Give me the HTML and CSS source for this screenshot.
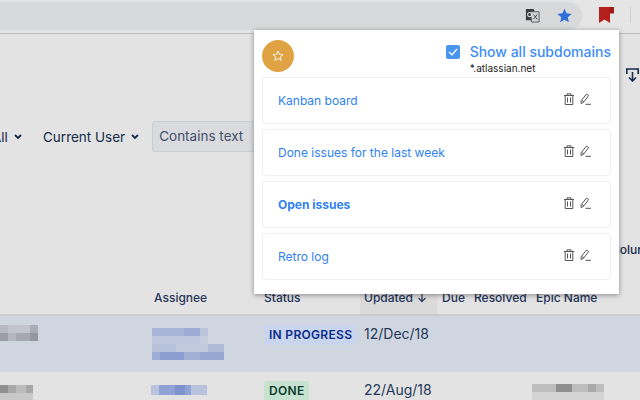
FILE: index.html
```html
<!DOCTYPE html>
<html lang="en">
<head>
<meta charset="utf-8">
<title>Saved filters</title>
<link rel="stylesheet" href="styles.css">
</head>
<body>
<div class="page">
  <header class="toolbar">
    <div class="omnibox">
      <svg class="translate" width="15" height="15" viewBox="0 0 16 16"><path d="M1 1h8l1 2v10H1z" fill="#3c3c3c"/><path d="M6 4h9v11H7z" fill="#d4d4d4" stroke="#555" stroke-width="1"/><circle cx="5" cy="7" r="2.2" fill="none" stroke="#ddd" stroke-width="1.1"/><path d="M9 7l4 5M13 7l-4 5" stroke="#444" stroke-width="1"/></svg>
      <svg class="star" width="15" height="15" viewBox="0 0 16 16"><path d="M8 .8l2.2 4.900 5.300.6-4 3.600 1.100 5.300L8 12.500l-4.600 2.700 1.100-5.300-4-3.600 5.300-.6z" fill="#2f6fd6"/></svg>
    </div>
    <svg class="mark" width="15" height="16" viewBox="0 0 15 16"><path d="M0 0h11v16l-5.500-3.500L0 16z" fill="#b3201c"/><path d="M11 0h4v6.500h-4z" fill="#a01c18"/></svg>
    <span class="divider"></span>
  </header>

  <main class="main">
    <div class="tools">
      <svg width="13" height="14" viewBox="0 0 13 14"><path d="M.8 6V1h11.400v5M6.500 4v9M3 9.500L6.500 13 10 9.500" fill="none" stroke="#172b4d" stroke-width="1.600"/></svg>
    </div>
    <div class="filters">
      <span class="filter first">All<svg class="chev" width="8" height="6" viewBox="0 0 8 6"><path d="M1 1l3 3 3-3" fill="none" stroke="#172b4d" stroke-width="1.800"/></svg></span>
      <span class="filter">Current User<svg class="chev" width="8" height="6" viewBox="0 0 8 6"><path d="M1 1l3 3 3-3" fill="none" stroke="#172b4d" stroke-width="1.800"/></svg></span>
      <div class="search">Contains text</div>
    </div>
    <div class="col-hint">Column</div>
    <div class="table">
      <div class="row head">
        <span></span>
        <span>Assignee</span>
        <span>Status</span>
        <span class="sorted">Updated <svg class="sort-arrow" width="10" height="10" viewBox="0 0 10 10"><path d="M5 .5v8M1.500 5L5 8.500 8.500 5" fill="none" stroke="#33415f" stroke-width="1.300"/></svg></span>
        <span>Due</span>
        <span>Resolved</span>
        <span>Epic Name</span>
      </div>
      <div class="row body selected">
        <span class="cell-pad"><svg class="mosaic" width="38" height="16" viewBox="0 0 38 16"><path d="M0 0h8v8H0z" fill="#b5b8bf"/><path d="M8 0h22v8H8z" fill="#c2c5cc"/><path d="M30 0h8v8h-8z" fill="#a9adb5"/><path d="M0 8h8v8H0z" fill="#9a9da5"/><path d="M8 8h8v8H8z" fill="#b4b7be"/><path d="M16 8h14v8H16z" fill="#a5a8b0"/><path d="M30 8h8v8h-8z" fill="#94989f"/></svg></span>
        <span class="cell-pad"><svg class="mosaic person" width="72" height="32" viewBox="0 0 72 32"><path d="M0 0h32v8H0z" fill="#a9b5d6"/><path d="M32 0h16v8H32z" fill="#9dabd2"/><path d="M48 0h8v8h-8z" fill="#b9c3da"/><path d="M0 8h48v8H0z" fill="#bcc6dc"/><path d="M48 8h8v8h-8z" fill="#c6cede"/><path d="M0 16h24v8H0z" fill="#b6c1da"/><path d="M24 16h32v8H24z" fill="#c0c9dd"/><path d="M56 16h16v8H56z" fill="#afbad8"/><path d="M0 24h8v8H0z" fill="#9dadd5"/><path d="M8 24h24v8H8z" fill="#8c9ecf"/><path d="M32 24h16v8H32z" fill="#a2b0d6"/><path d="M48 24h24v8H48z" fill="#96a7d2"/></svg></span>
        <span class="cell-pad"><span class="lozenge blue">IN PROGRESS</span></span>
        <span class="cell-pad date">12/Dec/18</span>
      </div>
      <div class="row body">
        <span class="cell-pad"><svg class="mosaic low" width="33" height="15" viewBox="0 0 33 15"><path d="M0 0h33v8H0z" fill="#a8a8a8"/><path d="M0 0h8v15H0z" fill="#8f8f8f"/><path d="M16 0h10v8H16z" fill="#bbb"/><path d="M0 8h33v7H0z" fill="#c8c8c8"/></svg></span>
        <span class="cell-pad"><svg class="mosaic low person-two" width="56" height="10" viewBox="0 0 56 10"><path d="M0 0h56v10H0z" fill="#b9c3de"/><path d="M8 0h32v10H8z" fill="#90a3d4"/><path d="M24 0h10v10H24z" fill="#7e93cd"/></svg></span>
        <span class="cell-pad"><span class="lozenge green">DONE</span></span>
        <span class="cell-pad date">22/Aug/18</span>
        <span></span>
        <span></span>
        <span class="cell-pad"><svg class="mosaic low epic" width="72" height="16" viewBox="0 0 72 16"><path d="M0 0h72v8H0z" fill="#bdbdbd"/><path d="M24 0h16v8H24z" fill="#8f8f8f"/><path d="M56 0h8v8h-8z" fill="#a9a9a9"/><path d="M0 8h72v8H0z" fill="#d4d4d4"/></svg></span>
      </div>
    </div>
  </main>

  <section class="popup">
    <div class="popup-top">
      <span class="avatar"><svg width="12" height="12" viewBox="0 0 16 16"><path d="M8 1.500l1.900 4.300 4.700.5-3.500 3.100 1 4.600L8 11.200l-4.100 2.800 1-4.600L1.400 6.300l4.700-.5z" fill="none" stroke="#fff" stroke-width="1.200"/></svg></span>
      <div class="domains">
        <label class="show-all">
          <span class="check"><svg width="10" height="8" viewBox="0 0 10 8"><path d="M1 4l3 2.800L9 1" fill="none" stroke="#fff" stroke-width="1.300"/></svg></span>
          Show all subdomains
        </label>
        <span class="domain">*.atlassian.net</span>
      </div>
    </div>
    <ul class="list">
      <li class="item"><span>Kanban board</span><span class="actions"><svg width="10" height="12" viewBox="0 0 10 12"><path d="M0 2.500h10M3 2.500V.8h4v1.700M1.200 2.500v9h7.600v-9M3.500 4.500v5M6.500 4.500v5" fill="none" stroke="#555" stroke-width="1"/></svg><svg width="11" height="12" viewBox="0 0 11 12"><path d="M1 10.500l.2-2.800L6.500 1 8.700 2.600 3.400 9.400zM2 7.500l2 1.500M5.500 11.300H11" fill="none" stroke="#555" stroke-width="1"/></svg></span></li>
      <li class="item"><span>Done issues for the last week</span><span class="actions"><svg width="10" height="12" viewBox="0 0 10 12"><path d="M0 2.500h10M3 2.500V.8h4v1.700M1.200 2.500v9h7.600v-9M3.500 4.500v5M6.500 4.500v5" fill="none" stroke="#555" stroke-width="1"/></svg><svg width="11" height="12" viewBox="0 0 11 12"><path d="M1 10.500l.2-2.800L6.500 1 8.700 2.600 3.400 9.400zM2 7.500l2 1.500M5.500 11.300H11" fill="none" stroke="#555" stroke-width="1"/></svg></span></li>
      <li class="item current"><span>Open issues</span><span class="actions"><svg width="10" height="12" viewBox="0 0 10 12"><path d="M0 2.500h10M3 2.500V.8h4v1.700M1.200 2.500v9h7.600v-9M3.500 4.500v5M6.500 4.500v5" fill="none" stroke="#555" stroke-width="1"/></svg><svg width="11" height="12" viewBox="0 0 11 12"><path d="M1 10.500l.2-2.800L6.500 1 8.700 2.600 3.400 9.400zM2 7.500l2 1.500M5.500 11.300H11" fill="none" stroke="#555" stroke-width="1"/></svg></span></li>
      <li class="item"><span>Retro log</span><span class="actions"><svg width="10" height="12" viewBox="0 0 10 12"><path d="M0 2.500h10M3 2.500V.8h4v1.700M1.200 2.500v9h7.600v-9M3.500 4.500v5M6.500 4.500v5" fill="none" stroke="#555" stroke-width="1"/></svg><svg width="11" height="12" viewBox="0 0 11 12"><path d="M1 10.500l.2-2.800L6.500 1 8.700 2.600 3.400 9.400zM2 7.500l2 1.500M5.500 11.300H11" fill="none" stroke="#555" stroke-width="1"/></svg></span></li>
    </ul>
  </section>
</div>
</body>
</html>
```
FILE: styles.css
```css
* { box-sizing: border-box; }
html, body { margin: 0; padding: 0; }
body { font-family: Inter, "Liberation Sans", sans-serif; color: #172b4d; }
.page { position: relative; width: 640px; height: 400px; overflow: hidden; background: #e3e3e3; }

.toolbar { display: flex; align-items: center; height: 34px; padding-bottom: 4px; background: #e5e5e5; border-bottom: 1px solid #bdbdbd; }
.omnibox { display: flex; align-items: center; justify-content: flex-end; width: 582px; height: 28px; margin-top: 2px; padding-right: 10px; gap: 17px; background: #d8d9db; border-radius: 0 14px 14px 0; }
.mark { margin-left: 17px; }
.divider { width: 1px; height: 16px; margin-left: 16px; background: #cfcfcf; }

.main { display: flex; flex-direction: column; }
.tools { display: flex; justify-content: flex-end; height: 15px; margin-top: 34px; margin-right: 1px; }
.filters { display: flex; align-items: center; height: 31px; margin-top: 38px; font-size: 13.500px; margin-left: -8px; }
.filter { display: flex; align-items: center; gap: 6px; }
.filter.first { width: 51px; }
.search { width: 110px; height: 31px; margin-left: 13px; padding: 6px; border: 1px solid #c9ccd1; border-radius: 3px; background: #d9dbdf; color: #44506b; white-space: nowrap; }
.col-hint { height: 16px; margin-top: 90px; margin-left: 611px; font-size: 12px; font-weight: 500; white-space: nowrap; }

.table { display: flex; flex-direction: column; }
.row { display: grid; grid-template-columns: 154px 110px 100px 78px 32px 62px 1fr; }
.head { height: 58px; align-items: end; border-bottom: 2px solid #cbcbcb; font-size: 12px; font-weight: 500; color: #26365a; }
.head span { display: block; padding-bottom: 9px; white-space: nowrap; }
.head .sorted { width: 77px; margin-left: -4px; padding-left: 4px; background: #dadada; }
.sort-arrow { margin-left: 1px; vertical-align: -1px; }
.body { height: 56px; }
.selected { background: #d0d6e0; }
.cell-pad { padding-top: 9px; }
.mosaic { display: block; filter: blur(.4px); }
.person { margin-top: 3px; margin-left: -2px; }
.low { margin-top: 4px; }
.person-two { margin-left: -3px; }
.epic { margin-left: -4px; margin-top: 3px; }
.date { font-size: 14px; color: #253858; white-space: nowrap; }
.lozenge { display: block; width: fit-content; padding: 2px 5px; border-radius: 3px; font-size: 12px; font-weight: 600; letter-spacing: .3px; line-height: 16px; white-space: nowrap; }
.blue { background: #c8d5ec; color: #0a2a8c; }
.green { background: #c8e2d2; color: #0a3d2a; }

.popup { position: absolute; left: 254px; top: 30px; width: 365px; height: 264px; padding: 0 8px; background: #fff; box-shadow: 0 1px 5px rgba(0,0,0,.4); }
.popup-top { display: flex; justify-content: space-between; height: 47px; }
.avatar { display: flex; align-items: center; justify-content: center; width: 32px; height: 32px; margin-top: 10px; border-radius: 50%; background: #e0a344; }
.domains { display: flex; flex-direction: column; margin-top: 13px; }
.show-all { display: flex; align-items: center; gap: 10px; margin-left: -24px; height: 17px; font-size: 14px; font-weight: 500; color: #3d8df5; white-space: nowrap; }
.check { display: flex; align-items: center; justify-content: center; width: 14px; height: 14px; border-radius: 2px; background: #4a94f2; }
.domain { font-size: 10px; line-height: 12px; margin-top: 2px; color: #222; }
.list { display: flex; flex-direction: column; gap: 5px; margin: 0; padding: 0; list-style: none; }
.item { display: flex; align-items: center; justify-content: space-between; height: 47px; padding: 0 19px 0 15px; border: 1px solid #eeeef5; border-radius: 4px; font-size: 12px; color: #2f82ef; }
.current { font-weight: 700; }
.actions { display: flex; gap: 6px; margin-top: -4px; }
```
